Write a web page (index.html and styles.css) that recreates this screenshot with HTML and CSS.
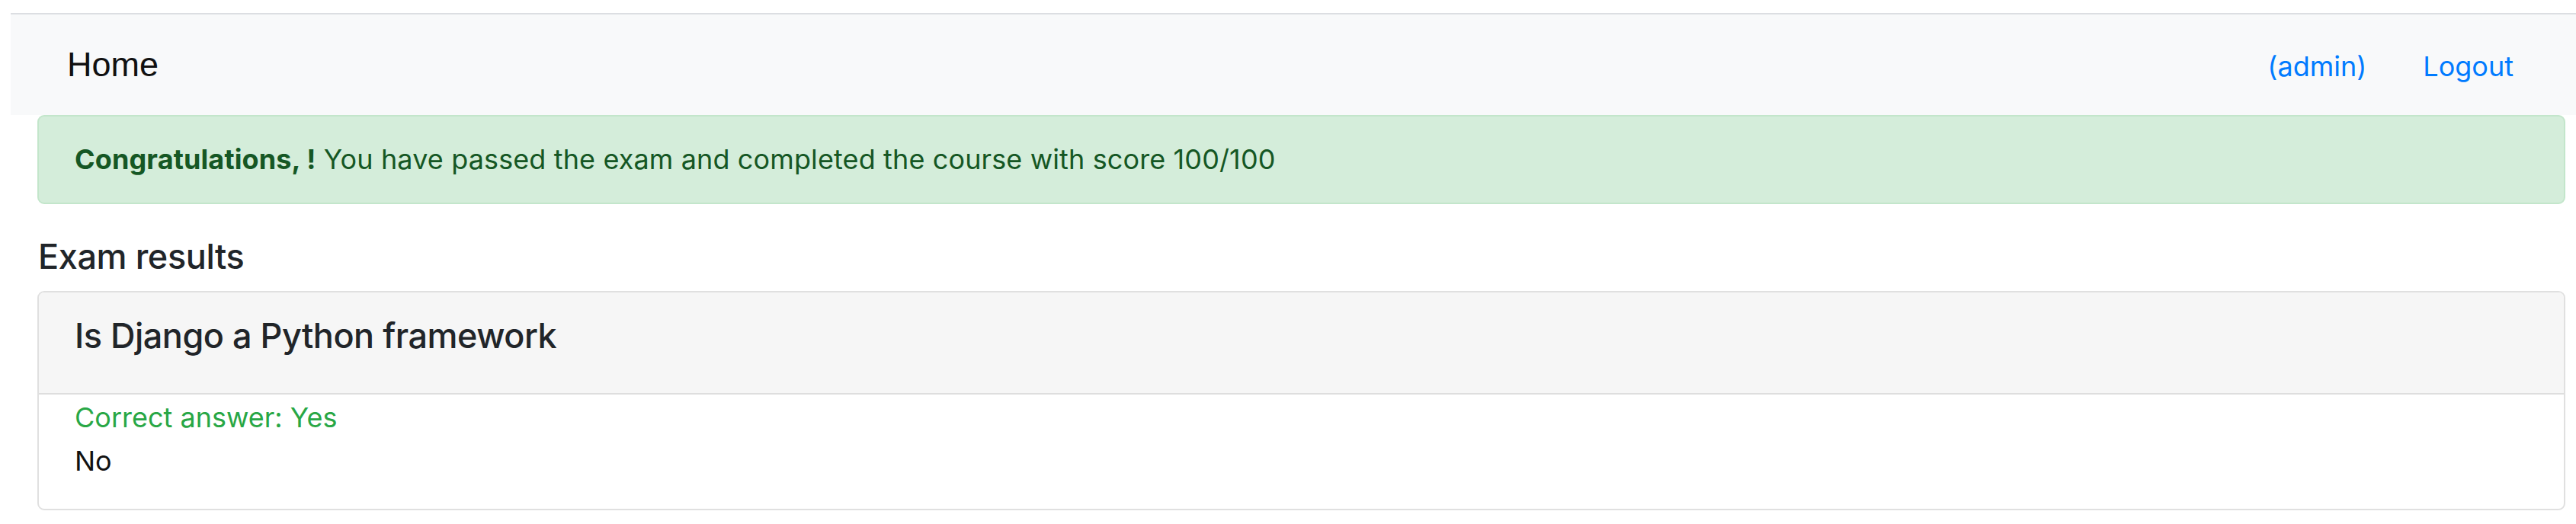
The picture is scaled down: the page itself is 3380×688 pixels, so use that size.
FILE: index.html
```html
<!DOCTYPE html>
<html lang="en">
<head>
<meta charset="utf-8">
<title>Exam results</title>
<link rel="stylesheet" href="styles.css">
</head>
<body>
<div class="page">
  <nav class="navbar">
    <a class="brand" href="#">Home</a>
    <div class="nav-links">
      <a class="nav-link" href="#">(admin)</a>
      <a class="nav-link" href="#">Logout</a>
    </div>
  </nav>
  <main class="content">
    <div class="alert"><b>Congratulations, !</b> You have passed the exam and completed the course with score 100/100</div>
    <h5 class="section-title">Exam results</h5>
    <div class="card">
      <div class="card-header">
        <h5 class="question">Is Django a Python framework</h5>
      </div>
      <div class="card-body">
        <div class="correct">Correct answer: Yes</div>
        <div class="answer">No</div>
      </div>
    </div>
  </main>
</div>
</body>
</html>
```

FILE: styles.css
```css
* { box-sizing: border-box; }

body {
  margin: 0;
  background: #fff;
  font-family: Inter, Roboto, "Liberation Sans", Arial, sans-serif;
  font-size: 36px;
  line-height: 54px;
  color: #212529;
}

.page {
  padding-top: 17px;
}

.navbar {
  margin-left: 14px;
  height: 134px;
  border-top: 2px solid #dcdee2;
  background: #f8f9fa;
  display: flex;
  align-items: center;
  justify-content: space-between;
  padding: 0 82px 0 74px;
}

.brand {
  font-family: "Liberation Sans", Arial, sans-serif;
  font-size: 45px;
  line-height: 67px;
  color: #111;
  text-decoration: none;
  padding-bottom: 1px;
}

.nav-links {
  display: flex;
  gap: 74px;
  padding-top: 4px;
}

.nav-link {
  color: #007bff;
  text-decoration: none;
}

.content {
  padding: 0 14px 0 49px;
}

.alert {
  background: #d4edda;
  border: 2px solid #c3e6cb;
  border-radius: 9px;
  color: #155724;
  padding: 29px 47px 30px;
  margin-bottom: 36px;
  letter-spacing: 0.12px;
}

.alert b {
  font-weight: 700;
}

.section-title {
  margin: 0 0 18px;
  padding-top: 6px;
  font-size: 45px;
  line-height: 54px;
  font-weight: 500;
  letter-spacing: -0.4px;
  color: #212529;
  padding-left: 1px;
}

.card {
  border: 2px solid #e0e0e0;
  border-radius: 9px;
  overflow: hidden;
}

.card-header {
  background: #f6f6f6;
  border-bottom: 2px solid #dedede;
  padding: 30px 47px 30px;
}

.question {
  margin: 0 0 18px;
  font-size: 45px;
  line-height: 54px;
  font-weight: 500;
  letter-spacing: -0.5px;
  color: #212529;
}

.card-body {
  padding: 3px 47px 36px;
}

.correct {
  color: #28a745;
}

.answer {
  margin-top: 3px;
  color: #111;
}
```
